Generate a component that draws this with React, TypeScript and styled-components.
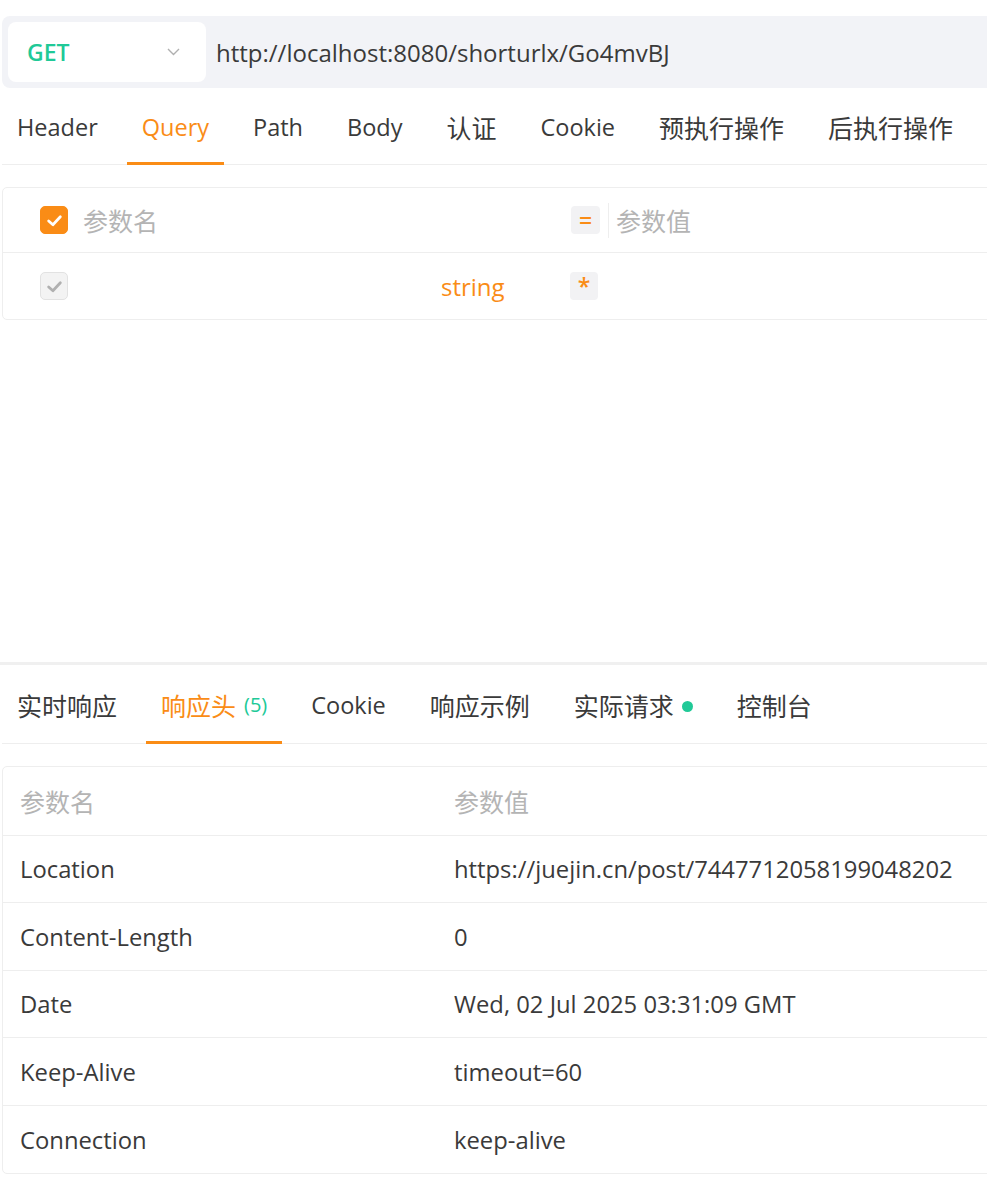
import React from "react";
import styled, { createGlobalStyle } from "styled-components";

const ORANGE = "#fa8c16";
const GREEN = "#20c997";
const TEXT = "#3a3a3a";
const MUTED = "#b4b4b4";
const LINE = "#eeeeee";

const Global = createGlobalStyle`
  html, body { margin: 0; padding: 0; background: #fff; overflow: hidden; }
  body { font-family: "Open Sans", "Noto Sans CJK SC", sans-serif; color: ${TEXT}; }
  * { box-sizing: border-box; }
`;

const Page = styled.div`
  width: 987px;
  height: 1189px;
  overflow: hidden;
  padding: 16px 0 0 2px;
`;

const RequestPane = styled.section`
  height: 646px;
`;

const UrlBar = styled.div`
  display: flex;
  align-items: center;
  height: 72px;
  margin-right: -30px;
  padding: 0 6px;
  background: #f2f3f7;
  border-radius: 8px 0 0 8px;
`;

const MethodSelect = styled.div`
  display: flex;
  align-items: center;
  justify-content: space-between;
  width: 198px;
  height: 60px;
  padding: 0 26px 0 19px;
  background: #fff;
  border-radius: 8px;
`;

const Method = styled.span`
  color: ${GREEN};
  font-size: 23px;
  font-weight: 600;
`;

const UrlText = styled.span`
  margin-left: 10px;
  font-size: 24px;
  color: ${TEXT};
`;

const TabList = styled.div<{ $h: number }>`
  display: flex;
  gap: 14px;
  height: ${(p) => p.$h}px;
  border-bottom: 1px solid ${LINE};
`;

const Tab = styled.div<{ $active?: boolean; $cjk?: boolean }>`
  display: flex;
  align-items: center;
  padding: 3px 15px 0;
  font-size: ${(p) => (p.$cjk ? 25 : 23.5)}px;
  color: ${(p) => (p.$active ? ORANGE : TEXT)};
  border-bottom: 3px solid ${(p) => (p.$active ? ORANGE : "transparent")};
  margin-bottom: -1px;
  white-space: nowrap;
`;

const Count = styled.span`
  color: ${GREEN};
  font-size: 20px;
  margin-left: 8px;
`;

const Dot = styled.span`
  display: inline-block;
  width: 11px;
  height: 11px;
  border-radius: 50%;
  background: ${GREEN};
  margin-left: 8px;
  margin-top: 4px;
`;

const TableBox = styled.div<{ $top: number }>`
  margin-top: ${(p) => p.$top}px;
  margin-right: -30px;
  border: 1px solid ${LINE};
  border-radius: 5px;
`;

const Row = styled.div<{ $h: number; $last?: boolean }>`
  display: flex;
  align-items: center;
  height: ${(p) => p.$h}px;
  border-bottom: ${(p) => (p.$last ? "none" : `1px solid ${LINE}`)};
`;

const CheckBox = styled.span<{ $on?: boolean }>`
  display: inline-flex;
  align-items: center;
  justify-content: center;
  width: 28px;
  height: 28px;
  margin-left: 37px;
  border-radius: 5px;
  background: ${(p) => (p.$on ? ORANGE : "#f3f3f3")};
  border: 1px solid ${(p) => (p.$on ? ORANGE : "#e2e2e2")};
`;

const NameCell = styled.span<{ $w: number }>`
  width: ${(p) => p.$w}px;
  margin-left: 15px;
  font-size: 25px;
  color: ${MUTED};
`;

const TypeCell = styled.span`
  width: 129px;
  margin-left: 373px;
  font-size: 24px;
  color: ${ORANGE};
`;

const OpBox = styled.span<{ $w: number }>`
  display: inline-flex;
  align-items: center;
  justify-content: center;
  width: ${(p) => p.$w}px;
  height: 28px;
  border-radius: 4px;
  background: #f2f2f4;
  color: ${ORANGE};
  font-size: 23px;
  font-weight: 600;
`;

const VDivider = styled.span`
  width: 1px;
  height: 35px;
  background: ${LINE};
  margin: 0 7px 0 8px;
`;

const Placeholder = styled.span`
  font-size: 25px;
  color: ${MUTED};
`;

const SectionDivider = styled.div`
  height: 3px;
  margin-left: -2px;
  background: #f0f0f0;
`;

const Cell = styled.span<{ $w?: number; $muted?: boolean }>`
  ${(p) => (p.$w ? `width: ${p.$w}px;` : "")}
  padding-left: 17px;
  font-size: ${(p) => (p.$muted ? 25 : 23.8)}px;
  color: ${(p) => (p.$muted ? MUTED : TEXT)};
  white-space: nowrap;
`;

const Check = ({ color }: { color: string }) => (
  <svg width="17" height="17" viewBox="0 0 16 16">
    <path d="M2.5 8.5 L6.5 12 L13.5 4.5" fill="none" stroke={color} strokeWidth="2.6" strokeLinecap="round" strokeLinejoin="round" />
  </svg>
);

const Chevron = () => (
  <svg width="13" height="8" viewBox="0 0 13 8">
    <path d="M1 1 L6.5 6.5 L12 1" fill="none" stroke="#b0b0b0" strokeWidth="1.4" />
  </svg>
);

const headers: [string, string][] = [
  ["Location", "https://juejin.cn/post/7447712058199048202"],
  ["Content-Length", "0"],
  ["Date", "Wed, 02 Jul 2025 03:31:09 GMT"],
  ["Keep-Alive", "timeout=60"],
  ["Connection", "keep-alive"],
];

export default function App() {
  return (
    <>
      <Global />
      <Page>
        <RequestPane>
          <UrlBar>
            <MethodSelect>
              <Method>GET</Method>
              <Chevron />
            </MethodSelect>
            <UrlText>http://localhost:8080/shorturlx/Go4mvBJ</UrlText>
          </UrlBar>
          <TabList $h={77}>
            <Tab>Header</Tab>
            <Tab $active>Query</Tab>
            <Tab>Path</Tab>
            <Tab>Body</Tab>
            <Tab $cjk>认证</Tab>
            <Tab>Cookie</Tab>
            <Tab $cjk>预执行操作</Tab>
            <Tab $cjk>后执行操作</Tab>
          </TabList>
          <TableBox $top={22}>
            <Row $h={65}>
              <CheckBox $on>
                <Check color="#fff" />
              </CheckBox>
              <NameCell $w={488}>参数名</NameCell>
              <OpBox $w={29}>=</OpBox>
              <VDivider />
              <Placeholder>参数值</Placeholder>
            </Row>
            <Row $h={66} $last>
              <CheckBox>
                <Check color="#b0b0b0" />
              </CheckBox>
              <TypeCell>string</TypeCell>
              <OpBox $w={28}>*</OpBox>
            </Row>
          </TableBox>
        </RequestPane>
        <SectionDivider />
        <TabList $h={79}>
          <Tab $cjk>实时响应</Tab>
          <Tab $cjk $active>
            响应头<Count>(5)</Count>
          </Tab>
          <Tab>Cookie</Tab>
          <Tab $cjk>响应示例</Tab>
          <Tab $cjk>
            实际请求<Dot />
          </Tab>
          <Tab $cjk>控制台</Tab>
        </TabList>
        <TableBox $top={22}>
          <Row $h={69}>
            <Cell $w={434} $muted>参数名</Cell>
            <Cell $muted>参数值</Cell>
          </Row>
          {headers.map(([k, v], i) => (
            <Row key={k} $h={i % 2 === 0 ? 67 : 68} $last={i === headers.length - 1}>
              <Cell $w={434}>{k}</Cell>
              <Cell>{v}</Cell>
            </Row>
          ))}
        </TableBox>
      </Page>
    </>
  );
}
